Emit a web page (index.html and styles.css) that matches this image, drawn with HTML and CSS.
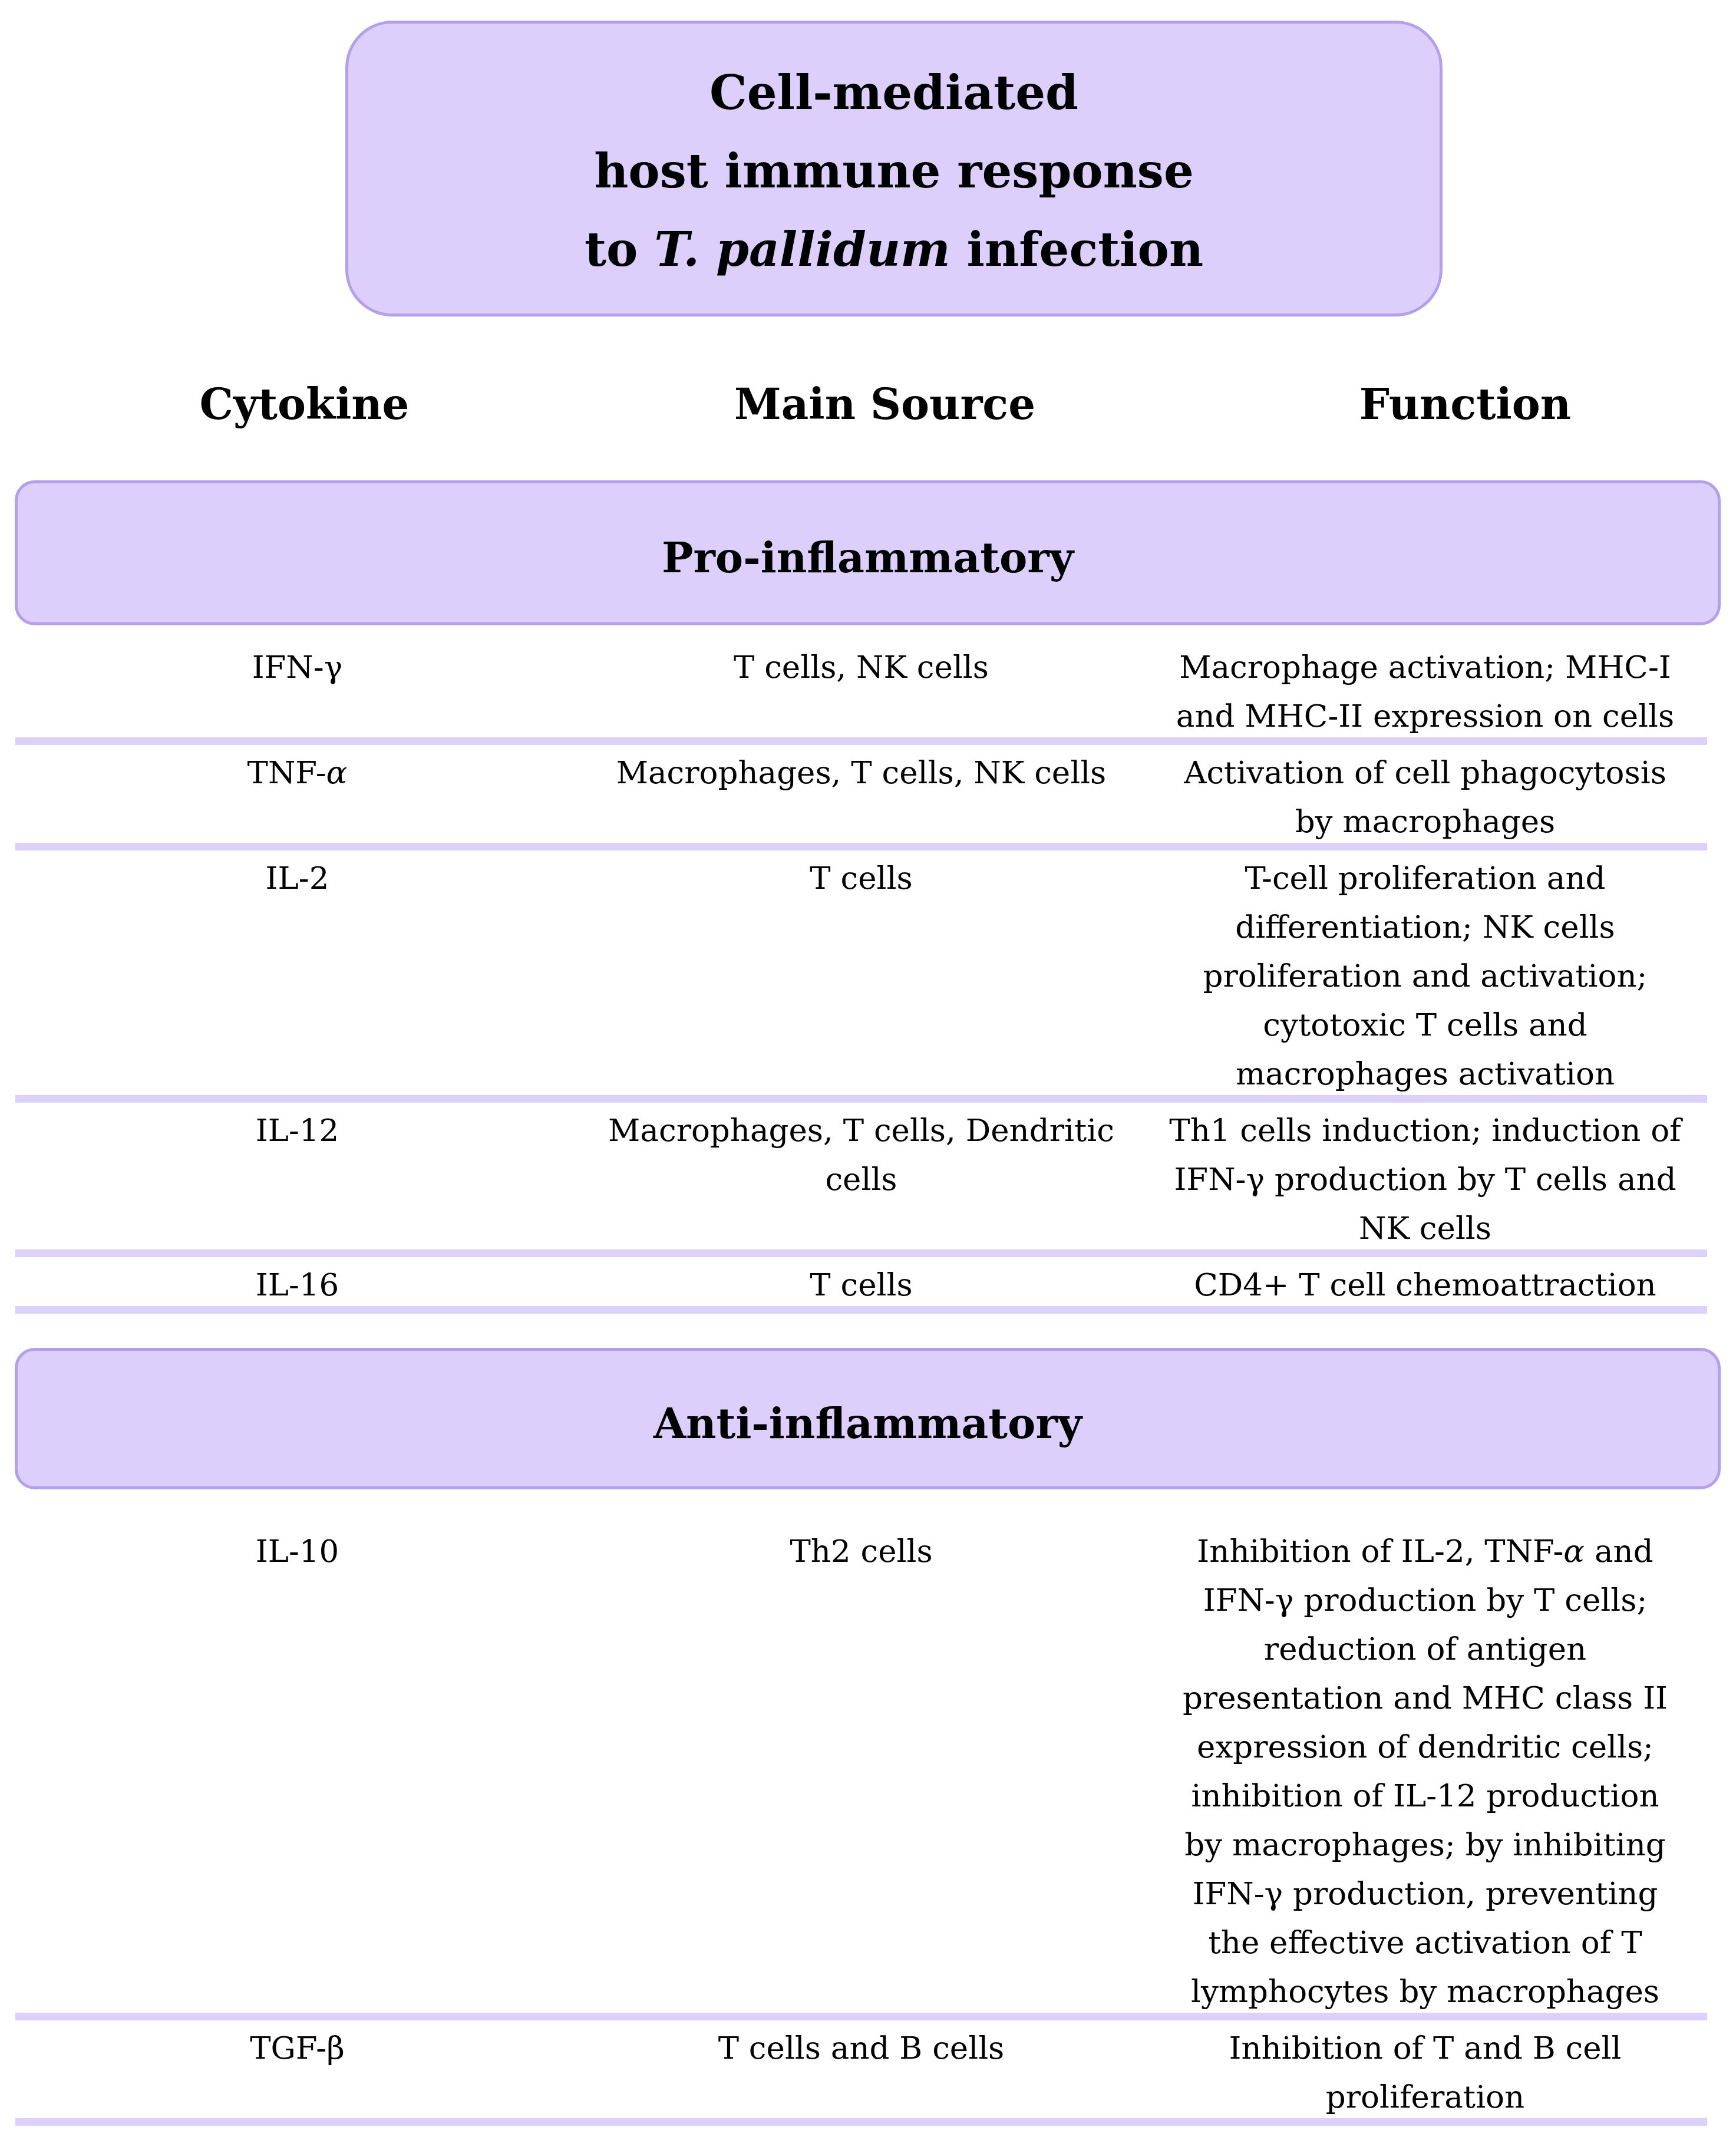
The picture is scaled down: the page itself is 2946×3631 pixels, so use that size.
FILE: index.html
```html
<!DOCTYPE html>
<html lang="en">
<head>
<meta charset="utf-8">
<title>Cell-mediated host immune response to T. pallidum infection</title>
<link rel="stylesheet" href="styles.css">
</head>
<body>
<div class="page">
  <div class="title-box">
    <div class="title">Cell-mediated<br>host immune response<br>to <i>T. pallidum</i> infection</div>
  </div>

  <div class="head-row">
    <div class="head">Cytokine</div>
    <div class="head">Main Source</div>
    <div class="head">Function</div>
  </div>

  <div class="bar">Pro-inflammatory</div>

  <div class="rows first">
    <div class="row">
      <div class="cell"><span class="txt">IFN-γ</span></div>
      <div class="cell"><span class="txt">T cells, NK cells</span></div>
      <div class="cell"><span class="txt">Macrophage activation; MHC-I<br>and MHC-II expression on cells</span></div>
    </div>
    <div class="row">
      <div class="cell"><span class="txt">TNF-<i>α</i></span></div>
      <div class="cell"><span class="txt">Macrophages, T cells, NK cells</span></div>
      <div class="cell"><span class="txt">Activation of cell phagocytosis<br>by macrophages</span></div>
    </div>
    <div class="row">
      <div class="cell"><span class="txt">IL-2</span></div>
      <div class="cell"><span class="txt">T cells</span></div>
      <div class="cell"><span class="txt">T-cell proliferation and<br>differentiation; NK cells<br>proliferation and activation;<br>cytotoxic T cells and<br>macrophages activation</span></div>
    </div>
    <div class="row">
      <div class="cell"><span class="txt">IL-12</span></div>
      <div class="cell"><span class="txt">Macrophages, T cells, Dendritic<br>cells</span></div>
      <div class="cell"><span class="txt">Th1 cells induction; induction of<br>IFN-γ production by T cells and<br>NK cells</span></div>
    </div>
    <div class="row">
      <div class="cell"><span class="txt">IL-16</span></div>
      <div class="cell"><span class="txt">T cells</span></div>
      <div class="cell"><span class="txt">CD4+ T cell chemoattraction</span></div>
    </div>
  </div>

  <div class="bar bar-anti">Anti-inflammatory</div>

  <div class="rows second">
    <div class="row">
      <div class="cell"><span class="txt">IL-10</span></div>
      <div class="cell"><span class="txt">Th2 cells</span></div>
      <div class="cell"><span class="txt">Inhibition of IL-2, TNF-<i>α</i> and<br>IFN-γ production by T cells;<br>reduction of antigen<br>presentation and MHC class II<br>expression of dendritic cells;<br>inhibition of IL-12 production<br>by macrophages; by inhibiting<br>IFN-γ production, preventing<br>the effective activation of T<br>lymphocytes by macrophages</span></div>
    </div>
    <div class="row">
      <div class="cell"><span class="txt">TGF-β</span></div>
      <div class="cell"><span class="txt">T cells and B cells</span></div>
      <div class="cell"><span class="txt">Inhibition of T and B cell<br>proliferation</span></div>
    </div>
  </div>
</div>
</body>
</html>
```

FILE: styles.css
```css
html, body {
  margin: 0;
  padding: 0;
  background: #ffffff;
}

body {
  font-family: "DejaVu Serif", "Liberation Serif", serif;
  color: #000000;
}

.page {
  width: 2946px;
  height: 3631px;
  overflow: hidden;
}

.title-box {
  box-sizing: border-box;
  margin: 35px 0 0 586px;
  width: 1862px;
  height: 502px;
  border: 5px solid #b4a0ea;
  border-radius: 80px;
  background: #dccffc;
  display: flex;
  align-items: center;
  justify-content: center;
}

.title {
  font-weight: bold;
  font-size: 80px;
  line-height: 133px;
  text-align: center;
  padding-top: 8px;
}

.head-row {
  display: grid;
  grid-template-columns: repeat(3, 985px);
  margin: 99px 0 0 24px;
}

.head {
  font-weight: bold;
  font-size: 72px;
  line-height: 100px;
  text-align: center;
}

.bar {
  box-sizing: border-box;
  margin: 79px 0 0 25px;
  width: 2895px;
  height: 246px;
  border: 5px solid #b4a0ea;
  border-radius: 34px;
  background: #dccffc;
  display: flex;
  align-items: center;
  justify-content: center;
  font-weight: bold;
  font-size: 71px;
  padding-top: 16px;
}

.bar-anti {
  margin-top: 58px;
  height: 240px;
}

.rows {
  margin-left: 26px;
  width: 2871px;
}

.rows.first {
  margin-top: 24px;
}

.rows.second {
  margin-top: 58px;
}

.row {
  display: grid;
  grid-template-columns: repeat(3, 957px);
}

.cell {
  font-size: 53px;
  line-height: 83px;
  text-align: center;
  border-bottom: 13px solid #dcd0fc;
  white-space: nowrap;
}

.txt {
  line-height: 60px;
  vertical-align: -5px;
}
```
